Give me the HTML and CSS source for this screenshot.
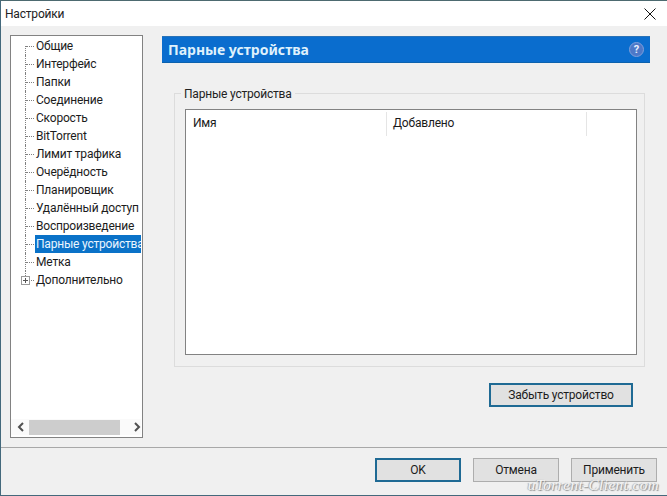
FILE: index.html
```html
<!DOCTYPE html>
<html lang="ru">
<head>
<meta charset="utf-8">
<title>Настройки</title>
<link rel="stylesheet" href="styles.css">
</head>
<body>
<div class="window">
  <header class="titlebar">
    <span class="title">Настройки</span>
    <svg class="close" width="12" height="12" viewBox="0 0 12 12"><path d="M.5.5l11 11M11.500.5l-11 11" stroke="#111" stroke-width="1" fill="none"/></svg>
  </header>
  <main class="main">
    <nav class="tree">
      <ul class="tree-list">
        <li class="node"><span class="label">Общие</span></li>
        <li class="node"><span class="label">Интерфейс</span></li>
        <li class="node"><span class="label">Папки</span></li>
        <li class="node"><span class="label">Соединение</span></li>
        <li class="node"><span class="label">Скорость</span></li>
        <li class="node"><span class="label">BitTorrent</span></li>
        <li class="node"><span class="label">Лимит трафика</span></li>
        <li class="node"><span class="label">Очерёдность</span></li>
        <li class="node"><span class="label">Планировщик</span></li>
        <li class="node"><span class="label">Удалённый доступ</span></li>
        <li class="node"><span class="label">Воспроизведение</span></li>
        <li class="node selected"><span class="label">Парные устройства</span></li>
        <li class="node"><span class="label">Метка</span></li>
        <li class="node last"><span class="expander"></span><span class="label">Дополнительно</span></li>
      </ul>
      <div class="hscroll">
        <svg class="arrow" width="8" height="10" viewBox="0 0 8 10"><path d="M6 1L2 5l4 4" stroke="#505050" stroke-width="2" fill="none"/></svg>
        <div class="track"><div class="thumb"></div></div>
        <svg class="arrow" width="8" height="10" viewBox="0 0 8 10"><path d="M2 1l4 4-4 4" stroke="#505050" stroke-width="2" fill="none"/></svg>
      </div>
    </nav>
    <section class="panel">
      <div class="panel-head">
        <h1 class="panel-title">Парные устройства</h1>
        <span class="help">?</span>
      </div>
      <fieldset class="group">
        <legend class="legend">Парные устройства</legend>
        <div class="list">
          <div class="list-head">
            <div class="col col-name">Имя</div>
            <div class="col col-added">Добавлено</div>
          </div>
        </div>
      </fieldset>
      <div class="forget-row">
        <button class="btn default forget">Забыть устройство</button>
      </div>
    </section>
  </main>
  <footer class="footer">
    <button class="btn default">OK</button>
    <button class="btn">Отмена</button>
    <button class="btn">Применить</button>
  </footer>
  <div class="watermark">uTorrent-Client.com</div>
</div>
</body>
</html>
```
FILE: styles.css
```css
* { box-sizing: border-box; }
html, body { margin: 0; padding: 0; }
body { width: 667px; height: 496px; overflow: hidden; font-family: Roboto, "Noto Sans", sans-serif; font-size: 12px; letter-spacing: -.2px; color: #1a1a1a; }
.window { position: relative; width: 667px; height: 496px; display: flex; flex-direction: column; background: #f0f0f0; border: 1px solid #44697c; border-top-color: #4d6a70; border-right: 0; }
.titlebar { height: 25px; flex: none; background: #fff; display: flex; align-items: center; justify-content: space-between; padding: 0 11px 0 4px; }
.title { font-size: 12px; color: #222; }
.main { flex: 1; display: flex; padding: 9px 0 0 9px; min-height: 0; }
.tree { width: 133px; height: 403px; background: #fff; border: 1px solid #828282; display: flex; flex-direction: column; justify-content: space-between; padding: 1px 1px 1px 0; }
.tree-list { list-style: none; margin: 0; padding: 0; }
.node { position: relative; height: 18px; padding-left: 24px; display: flex; align-items: center; white-space: nowrap; overflow: hidden; }
.node::before { content: ""; position: absolute; left: 14px; top: 0; height: 18px; border-left: 1px dotted #808080; }
.node::after { content: ""; position: absolute; left: 15px; top: 9px; width: 8px; border-top: 1px dotted #808080; }
.node:first-child::before { top: 9px; height: 9px; }
.node.last::before { height: 9px; }
.label { padding: 0 1px; line-height: 18px; color: #1c1c1c; }
.selected .label { background: #0a72c8; color: #eaf6ff; flex: 1; overflow: hidden; }
.expander { position: absolute; left: 10px; top: 5px; width: 9px; height: 9px; border: 1px solid #9a9a9a; background: linear-gradient(#555,#555) center/5px 1px no-repeat, linear-gradient(#555,#555) center/1px 5px no-repeat, #fff; z-index: 1; }
.hscroll { height: 16px; flex: none; margin-bottom: 1px; padding: 0 5px 0 6px; display: flex; align-items: center; gap: 4px; background: #fafafa; }
.arrow { flex: none; }
.track { flex: 1; height: 15px; padding-right: 9px; }
.thumb { height: 15px; width: 91px; background: #cdcdcd; }
.panel { width: 488px; margin: 1px 0 0 19px; display: flex; flex-direction: column; }
.panel-head { height: 27px; background: #0a6dce; display: flex; align-items: center; justify-content: space-between; padding: 0 6px; box-shadow: inset 0 1px 0 #2a72b6, inset 0 -1px 0 #0c62ae; }
.panel-title { margin: 0; font-family: "Noto Sans", sans-serif; font-size: 14px; font-weight: 700; letter-spacing: 0; color: #dff1fc; }
.help { width: 15px; height: 15px; border-radius: 50%; background: #4d78c8; border: 1px solid #7e9fdb; color: #e8f0ff; font-size: 11px; font-weight: 700; line-height: 13px; text-align: center; }
.group { margin: 22px 5px 0 12px; padding: 8px 7px 12px 10px; height: 282px; border: 1px solid #dcdcdc; min-width: 0; }
.legend { margin-left: -4px; padding: 2px 3px 0; color: #222; line-height: 14px; }
.list { height: 246px; background: #fff; border: 1px solid #828282; }
.list-head { display: flex; height: 26px; padding-top: 2px; }
.col { height: 24px; padding-left: 7px; line-height: 23px; border-right: 1px solid #e5e5e5; }
.col-name { width: 201px; }
.col-added { width: 200px; padding-left: 6px; }
.forget-row { display: flex; justify-content: flex-end; padding: 16px 17px 0 0; }
.btn { width: 86px; height: 24px; padding: 0; font: inherit; letter-spacing: inherit; color: #1c1c1c; background: #e1e1e1; border: 1px solid #adadad; }
.btn.default { border: 2px solid #1f6a94; }
.forget { width: 144px; }
.footer { height: 48px; flex: none; border-top: 1px solid #a8a8a8; display: flex; justify-content: flex-end; gap: 12px; padding: 10px 10px 0 0; }
.watermark { position: absolute; right: 8px; bottom: 1px; font-family: "Liberation Serif", serif; font-style: italic; font-size: 15px; letter-spacing: .5px; color: #f4f4f4; text-shadow: 1px 1px 1px #8a8a8a, -1px 0 1px #a8a8a8; }
```
